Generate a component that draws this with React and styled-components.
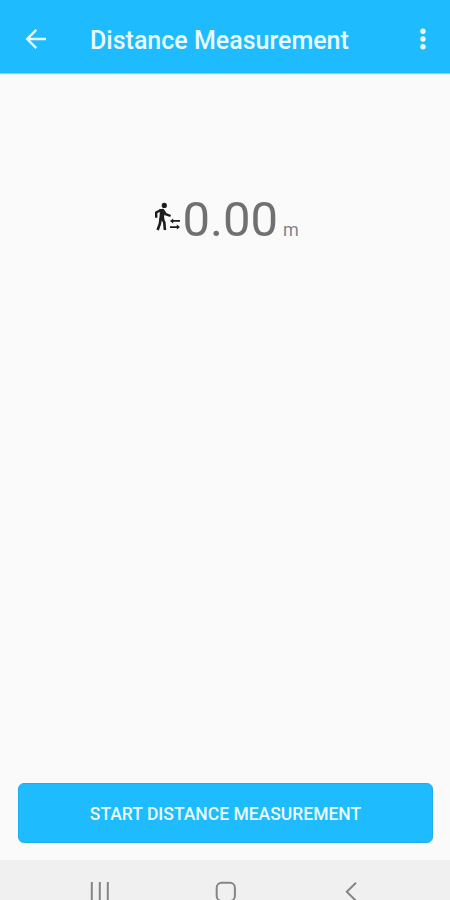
import React from 'react';
import styled, { createGlobalStyle } from 'styled-components';

const GlobalStyle = createGlobalStyle`
  * {
    box-sizing: border-box;
  }

  body {
    margin: 0;
    background: #fafafa;
    font-family: Roboto, 'Liberation Sans', sans-serif;
    overflow: hidden;
  }
`;

const BackIcon = () => (
  <svg width="22" height="22" viewBox="0 0 22 22" fill="none" stroke="#e9fbff" strokeWidth="2.4">
    <path d="M21 11H3M11.3 1.8L2.2 11L11.3 20.2" />
  </svg>
);

const MoreIcon = () => (
  <svg width="8" height="24" viewBox="0 0 8 24" fill="#e9fbff">
    <circle cx="4" cy="4.3" r="2.7" />
    <circle cx="4" cy="12" r="2.7" />
    <circle cx="4" cy="19.7" r="2.7" />
  </svg>
);

const WalkIcon = () => (
  <svg width="28" height="30" viewBox="0 0 28 30" fill="none" stroke="#1c1c1c">
    <circle cx="12.3" cy="3.4" r="2.6" fill="#1c1c1c" stroke="none" />
    <path d="M7 7.2L11.6 6.8L13.2 10.5L12 14.8L12.6 18.2L7.2 18.2L7.8 11Z" fill="#1c1c1c" stroke="none" />
    <path d="M9 8L4.2 10.4V15.8" strokeWidth="2.4" />
    <path d="M11.2 8.4L13.8 12.2L18.6 14" strokeWidth="2.4" />
    <path d="M8.7 16.5L7.8 22L5.6 28" strokeWidth="2.6" />
    <path d="M9.9 16.2L12.3 20.4L12.9 28" strokeWidth="2.6" />
    <path d="M19.5 18.9H28M18 25.1H26" strokeWidth="1.7" />
    <path d="M21.2 16.4V21.4L18 18.9ZM24.8 22.6V27.6L28 25.1Z" fill="#1c1c1c" stroke="none" />
  </svg>
);

const RecentsIcon = () => (
  <svg width="20" height="22" viewBox="0 0 20 22" stroke="#858585" strokeWidth="2">
    <path d="M2.8 1V21M10.8 1V21M18.8 1V21" />
  </svg>
);

const HomeIcon = () => (
  <svg width="22" height="22" viewBox="0 0 22 22" fill="none" stroke="#858585" strokeWidth="2">
    <rect x="2.7" y="1.8" width="18.2" height="18.2" rx="5" />
  </svg>
);

const NavBackIcon = () => (
  <svg width="12" height="22" viewBox="0 0 12 22" fill="none" stroke="#858585" strokeWidth="2">
    <path d="M11 1.8L1.8 10.8L11 19.8" />
  </svg>
);

const App = () => (
  <>
    <GlobalStyle />
    <Screen>
      <Header>
        <IconButton aria-label="Back" $width={22}>
          <BackIcon />
        </IconButton>
        <Title>Distance Measurement</Title>
        <IconButton aria-label="More options" $width={8}>
          <MoreIcon />
        </IconButton>
      </Header>

      <Content>
        <Reading>
          <WalkIcon />
          <Distance>0.00</Distance>
          <Unit>m</Unit>
        </Reading>
        <StartButton>START DISTANCE MEASUREMENT</StartButton>
      </Content>

      <NavBar>
        <NavItem $width={20}>
          <RecentsIcon />
        </NavItem>
        <NavItem $width={22}>
          <HomeIcon />
        </NavItem>
        <NavItem $width={12}>
          <NavBackIcon />
        </NavItem>
      </NavBar>
    </Screen>
  </>
);

const Screen = styled.div`
  display: flex;
  flex-direction: column;
  width: 450px;
  height: 900px;
  overflow: hidden;
  background: #fafafa;
`;

const Header = styled.header`
  display: flex;
  align-items: center;
  flex: none;
  height: 73px;
  padding: 5px 23px 0 25px;
  background: #1ebbff;
  box-shadow: 0 1px 1px rgba(30, 187, 255, 0.6);
`;

const IconButton = styled.button`
  display: flex;
  flex: none;
  width: ${props => props.$width}px;
  padding: 0;
  border: 0;
  background: none;
`;

const Title = styled.h1`
  flex: 1;
  margin: 4px 0 0 43px;
  color: #e9fbff;
  font-size: 25px;
  font-weight: 500;
  line-height: 30px;
  white-space: nowrap;
`;

const Content = styled.main`
  display: flex;
  flex: 1;
  flex-direction: column;
  justify-content: space-between;
  padding: 118px 17px 17.5px 18px;
`;

const Reading = styled.div`
  display: flex;
  align-items: baseline;
  margin-left: 134px;
  color: #707070;

  svg {
    align-self: flex-start;
    margin-top: 11px;
  }
`;

const Distance = styled.span`
  margin-left: 2.5px;
  font-size: 49px;
  line-height: 58px;
`;

const Unit = styled.span`
  margin-left: 5px;
  color: #858585;
  font-size: 18px;
`;

const StartButton = styled.button`
  flex: none;
  height: 59.5px;
  padding: 2px 0 0;
  border: 1px solid #20aeea;
  border-radius: 6px;
  background: #1ebbff;
  color: #e9fbff;
  font-family: inherit;
  font-size: 17.5px;
  font-weight: 500;
`;

/* Every item is centred in its own third of the bar */
const NavBar = styled.nav`
  display: grid;
  grid-template-columns: repeat(3, 126px);
  justify-content: center;
  flex: none;
  height: 40px;
  padding-top: 21px;
  background: #f0f0f0;
`;

const NavItem = styled.div`
  display: flex;
  justify-self: center;
  width: ${props => props.$width}px;
`;

export default App;
